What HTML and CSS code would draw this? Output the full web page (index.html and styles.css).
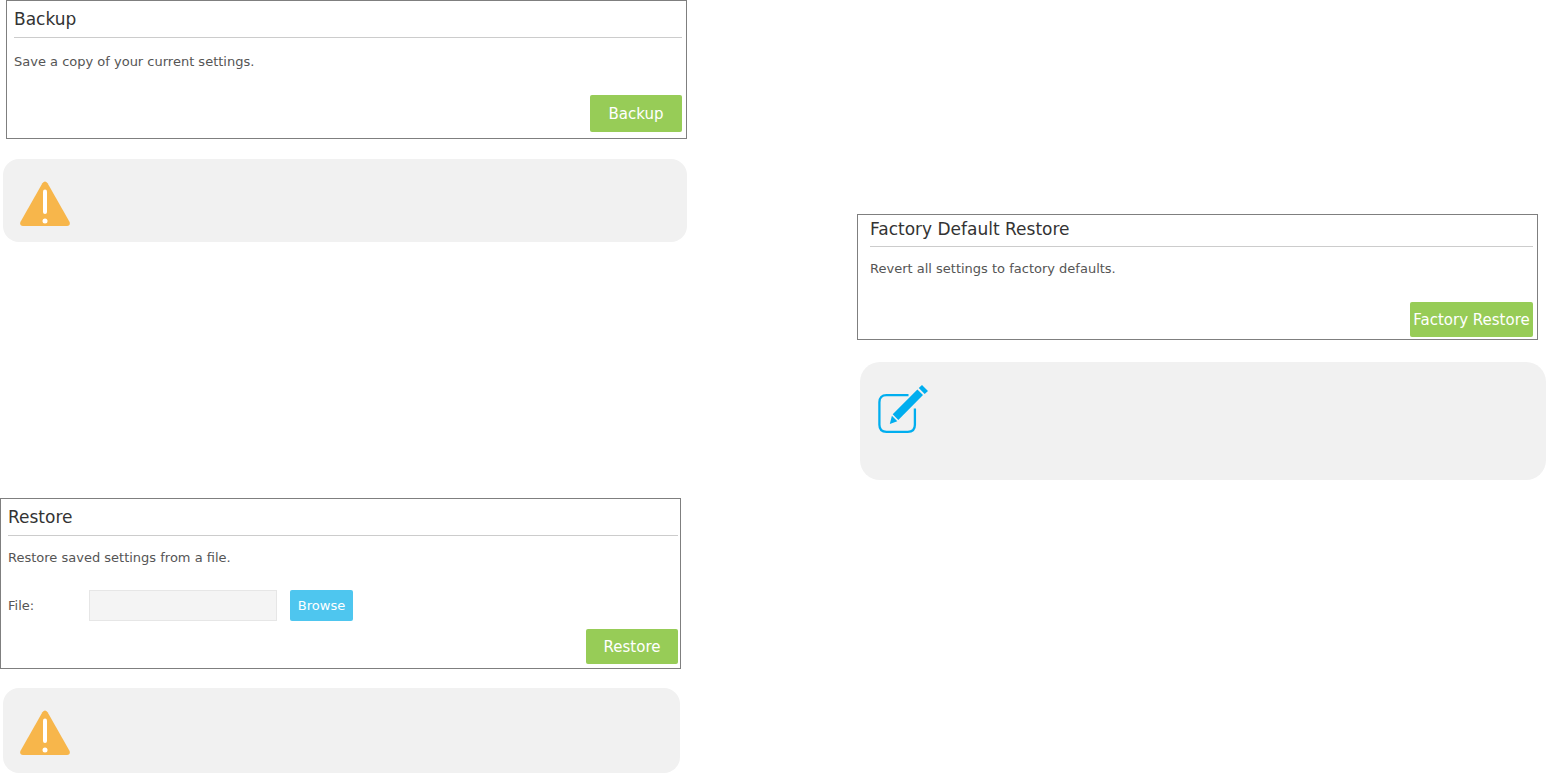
FILE: index.html
```
<!DOCTYPE html>
<html lang="en">
<head>
  <meta charset="UTF-8">
  <meta name="viewport" content="width=device-width, initial-scale=1.0">
  <title>Backup &amp; Restore</title>
  <link rel="stylesheet" href="styles.css">
</head>
<body>
  <main class="page">

    <div class="column">
      <!-- Backup -->
      <section class="panel backup">
        <h2>Backup</h2>
        <p>Save a copy of your current settings.</p>
        <div class="actions">
          <button type="button" class="btn">Backup</button>
        </div>
      </section>

      <div class="note">
        <svg class="warning-icon" viewBox="0 0 52 46" aria-hidden="true">
          <path d="M23.4 2.2Q26 -1 28.6 2.2L50.6 41Q51.6 45 48 45H4Q0.400 45 1.400 41Z" fill="#f7b64b"/>
          <path d="M26 10.500V31" stroke="#fff" stroke-width="4" stroke-linecap="round"/>
          <circle cx="26" cy="40" r="2.500" fill="#fff"/>
        </svg>
      </div>

      <!-- Restore -->
      <section class="panel restore">
        <h2>Restore</h2>
        <p>Restore saved settings from a file.</p>
        <form>
          <div class="file-row">
            <label for="file-name">File:</label>
            <input type="text" id="file-name">
            <button type="button" class="btn browse">Browse</button>
          </div>
          <div class="actions">
            <button type="button" class="btn">Restore</button>
          </div>
        </form>
      </section>

      <div class="note restore-note">
        <svg class="warning-icon" viewBox="0 0 52 46" aria-hidden="true">
          <path d="M23.4 2.2Q26 -1 28.6 2.2L50.6 41Q51.6 45 48 45H4Q0.400 45 1.400 41Z" fill="#f7b64b"/>
          <path d="M26 10.500V31" stroke="#fff" stroke-width="4" stroke-linecap="round"/>
          <circle cx="26" cy="40" r="2.500" fill="#fff"/>
        </svg>
      </div>
    </div>

    <div class="column factory-column">
      <!-- Factory Default Restore -->
      <section class="panel factory">
        <h2>Factory Default Restore</h2>
        <p>Revert all settings to factory defaults.</p>
        <div class="actions">
          <button type="button" class="btn wide">Factory Restore</button>
        </div>
      </section>

      <div class="note factory-note">
        <svg class="edit-icon" viewBox="0 0 52 50" aria-hidden="true">
          <path d="M31.500 10.200H9.500Q2.400 10.200 2.400 17.300V39.800Q2.400 46.900 9.500 46.900H30.800Q37.900 46.900 37.900 39.800V23.400" fill="none" stroke="#00aeef" stroke-width="2.300"/>
          <path d="M15.700 29.300L40.400 4.400L46 10L21.300 34.900ZM41.800 3L45 0L51 6L47.700 9ZM14.900 30.700L20.300 36.200L12.800 39Z" fill="#00aeef"/>
        </svg>
      </div>
    </div>

  </main>
</body>
</html>
```
FILE: styles.css
```
* {
  margin: 0;
  padding: 0;
  box-sizing: border-box;
}
body {
  font-family: Verdana, "DejaVu Sans", sans-serif;
  font-size: 13px;
  line-height: 20px;
  color: #555;
  background-color: #fff;
}
.page {
  display: grid;
  grid-template-columns: 687fr 689fr;
  column-gap: 170px;
  padding-right: 1px;
}
.factory-column {
  padding-top: 214px;
}

/* Panels */
.panel {
  border: 1px solid #7f7f7f;
  padding: 0 4px 4px 7px;
}
.panel h2 {
  font-size: 17px;
  font-weight: normal;
  line-height: 36px;
  color: #333;
  border-bottom: 1px solid #ccc;
}
.panel p {
  margin-top: 12px;
}
.actions {
  display: flex;
  justify-content: flex-end;
}
.backup {
  margin-left: 6px;
  padding-bottom: 6px;
}
.backup p {
  margin-top: 14px;
}
.backup .actions {
  margin-top: 23px;
}
.backup .btn {
  height: 37px;
}
.restore {
  margin-top: 256px;
  margin-right: 6px;
  padding-right: 2px;
}
.factory {
  margin-right: 8px;
  padding-left: 12px;
  padding-bottom: 2px;
}
.factory h2 {
  line-height: 28px;
  padding-bottom: 3px;
}
.factory .actions {
  margin-top: 23px;
}

/* Controls */
.btn {
  width: 92px;
  height: 35px;
  border: none;
  border-radius: 2px;
  background-color: #97cc57;
  color: #fff;
  font-family: inherit;
  font-size: 15px;
  cursor: pointer;
}
.btn:hover {
  background-color: #88bd48;
}
.btn.wide {
  width: 123px;
}
.btn.browse {
  width: 63px;
  height: 31px;
  margin-left: 13px;
  background-color: #4ec6ef;
  font-size: 13px;
}
.file-row {
  display: flex;
  align-items: center;
  margin: 22px 0 8px;
}
.file-row label {
  width: 81px;
}
.file-row input {
  width: 188px;
  height: 31px;
  padding: 0 8px;
  border: 1px solid #e6e6e6;
  background-color: #f4f4f4;
  font-family: inherit;
  font-size: 13px;
}

/* Notes */
.note {
  margin-top: 20px;
  margin-left: 3px;
  padding: 22px 16px 15px;
  border-radius: 16px;
  background-color: #f1f1f1;
}
.note svg {
  display: block;
}
.restore-note {
  margin-top: 19px;
  margin-right: 7px;
  padding-bottom: 17px;
}
.factory-note {
  margin-top: 22px;
  padding: 23px 17px 45px;
  border-radius: 20px;
}
.warning-icon {
  width: 52px;
  height: 46px;
}
.edit-icon {
  width: 52px;
  height: 50px;
}
```
